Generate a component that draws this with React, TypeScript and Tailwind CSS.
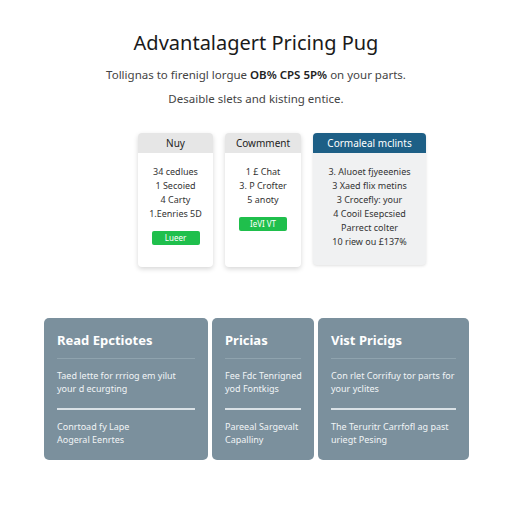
import React from "react";

type Plan = {
  name: string;
  lines: string[];
  button?: string;
  highlight?: boolean;
  width: string;
};

const plans: Plan[] = [
  { name: "Nuy", lines: ["34 cedlues", "1 Secoied", "4 Carty", "1.Eenries 5D"], button: "Lueer", width: "w-[75px]" },
  { name: "Cowmment", lines: ["1 £ Chat", "3. P Crofter", "5 anoty"], button: "IeVI VT", width: "w-[76px]" },
  {
    name: "Cormaleal mclints",
    lines: ["3. Aluoet fjyeeenies", "3 Xaed flix metins", "3 Crocefly: your", "4 Cooil Esepcsied", "Parrect colter", "10 riew ou £137%"],
    highlight: true,
    width: "w-[113px]",
  },
];

const panels = [
  {
    title: "Read Epctiotes",
    body: ["Taed lette for rrriog em yilut", "your d ecurgting"],
    foot: ["Conrtoad fy Lape", "Aogeral Eenrtes"],
    width: "w-[164px]",
  },
  {
    title: "Pricias",
    body: ["Fee Fdc Tenrigned", "yod Fontkigs"],
    foot: ["Pareeal Sargevalt", "Capalliny"],
    width: "w-[102px]",
  },
  {
    title: "Vist Pricigs",
    body: ["Con rlet Corrifuy tor parts for", "your yclites"],
    foot: ["The Teruritr Carrfofl ag past", "uriegt Pesing"],
    width: "w-[151px]",
  },
];

const PlanCard: React.FC<{ plan: Plan }> = ({ plan }) => (
  <div
    className={`${plan.width} rounded-[4px] overflow-hidden flex flex-col ${
      plan.highlight ? "bg-[#f0f1f2] h-[132px] shadow-[0_1px_3px_rgba(0,0,0,0.12)]" : "bg-white h-[134px] shadow-[0_2px_5px_rgba(0,0,0,0.16)]"
    }`}
  >
    <div
      className={`h-[20px] flex items-center justify-center text-[10px] ${
        plan.highlight ? "bg-[#1d5f86] text-white" : "bg-[#e6e6e6] text-[#222]"
      }`}
    >
      {plan.name}
    </div>
    <div className="flex flex-col items-center pt-[12px] text-[9px] leading-[14px] text-[#333] whitespace-nowrap">
      {plan.lines.map((l) => (
        <div key={l}>{l}</div>
      ))}
      {plan.button && (
        <div className="mt-[10px] w-[48px] h-[14px] rounded-[2px] bg-[#1fbf4c] text-white text-[8px] flex items-center justify-center">
          {plan.button}
        </div>
      )}
    </div>
  </div>
);

export default function App() {
  return (
    <div className="w-[512px] h-[512px] bg-white text-[#222]" style={{ fontFamily: "'Noto Sans', 'Open Sans', sans-serif" }}>
      <div className="pt-[29px] text-center text-[20px] leading-[28px] text-[#1a1a1a]">Advantalagert Pricing Pug</div>
      <div className="mt-[6px] text-center text-[11.5px] leading-[24px] text-[#444]">
        <div>
          Tollignas to firenigl lorgue <span className="font-semibold text-[#222]">OB% CPS 5P%</span> on your parts.
        </div>
        <div>Desaible slets and kisting entice.</div>
      </div>

      <div className="mt-[22px] ml-[138px] flex gap-[12px] items-start">
        {plans.map((p) => (
          <PlanCard key={p.name} plan={p} />
        ))}
      </div>

      <div className="mt-[51px] ml-[44px] flex gap-[4px]">
        {panels.map((p) => (
          <div key={p.title} className={`${p.width} h-[142px] rounded-[5px] bg-[#7b909d] text-white px-[13px] pt-[13px] whitespace-nowrap`}>
            <div className="text-[13px] font-bold leading-[18px]">{p.title}</div>
            <div className="mt-[9px] h-px bg-[#8fa3ae]" />
            <div className="mt-[10px] text-[9px] leading-[13px] text-[#f1f4f6]">
              {p.body.map((b) => (
                <div key={b}>{b}</div>
              ))}
            </div>
            <div className="mt-[13px] h-[2px] bg-[#d9e1e6]" />
            <div className="mt-[10px] text-[9px] leading-[13px] text-[#f1f4f6]">
              {p.foot.map((b) => (
                <div key={b}>{b}</div>
              ))}
            </div>
          </div>
        ))}
      </div>
    </div>
  );
}
